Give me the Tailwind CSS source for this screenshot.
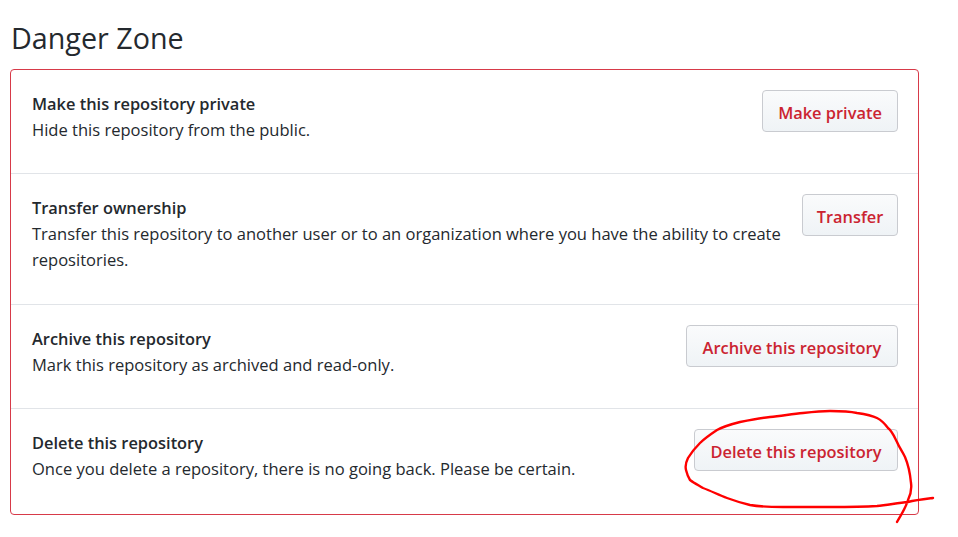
<!DOCTYPE html>
<html lang="en">
<head>
    <meta charset="UTF-8">
    <meta name="viewport" content="width=device-width, initial-scale=1.0">
    <title>Danger Zone</title>
    <script src="https://cdn.jsdelivr.net/npm/@tailwindcss/browser@4"></script>
</head>
<body class="bg-white font-['Open_Sans',sans-serif] text-[#24292e]">
    <div class="relative w-[958px] h-[537px] overflow-hidden pl-[10px] pr-[39px] pt-[19px]">
        <h2 class="pl-px text-[28.7px] leading-[38px] mb-[12px]">Danger Zone</h2>

        <!-- Settings box -->
        <div class="border border-[#d73a49] rounded-[4px] text-[16.55px] leading-[26px]">
            <div class="flex items-start justify-between h-[104px] pl-[21px] pr-[20px] pt-[21px] border-b border-[#e1e4e8]">
                <div>
                    <p class="font-semibold text-[16.4px]">Make this repository private</p>
                    <p>Hide this repository from the public.</p>
                </div>
                <button class="-mt-px pt-[3px] h-[42px] w-[136px] shrink-0 rounded-[4px] border border-[#c9cbd0] bg-gradient-to-b from-[#fafbfc] to-[#eff3f6] text-[#cb2431] font-semibold text-[16.4px]">Make private</button>
            </div>
            <div class="flex items-start justify-between h-[131px] pl-[21px] pr-[20px] pt-[21px] border-b border-[#e1e4e8]">
                <div class="w-[760px]">
                    <p class="font-semibold text-[16.4px]">Transfer ownership</p>
                    <p>Transfer this repository to another user or to an organization where you have the ability to create repositories.</p>
                </div>
                <button class="-mt-px pt-[3px] h-[42px] w-[96px] shrink-0 rounded-[4px] border border-[#c9cbd0] bg-gradient-to-b from-[#fafbfc] to-[#eff3f6] text-[#cb2431] font-semibold text-[16.4px]">Transfer</button>
            </div>
            <div class="flex items-start justify-between h-[104px] pl-[21px] pr-[20px] pt-[21px] border-b border-[#e1e4e8]">
                <div>
                    <p class="font-semibold text-[16.4px]">Archive this repository</p>
                    <p>Mark this repository as archived and read-only.</p>
                </div>
                <button class="-mt-px pt-[3px] h-[42px] w-[212px] shrink-0 rounded-[4px] border border-[#c9cbd0] bg-gradient-to-b from-[#fafbfc] to-[#eff3f6] text-[#cb2431] font-semibold text-[16.4px]">Archive this repository</button>
            </div>
            <div class="flex items-start justify-between h-[105px] pl-[21px] pr-[20px] pt-[21px]">
                <div>
                    <p class="font-semibold text-[16.4px]">Delete this repository</p>
                    <p>Once you delete a repository, there is no going back. Please be certain.</p>
                </div>
                <button class="-mt-px pt-[3px] h-[42px] w-[204px] shrink-0 rounded-[4px] border border-[#c9cbd0] bg-gradient-to-b from-[#fafbfc] to-[#eff3f6] text-[#cb2431] font-semibold text-[16.4px]">Delete this repository</button>
            </div>
        </div>

        <!-- Hand drawn circle -->
        <svg class="absolute left-0 top-0 pointer-events-none" width="958" height="537" viewBox="0 0 958 537" fill="none">
            <path d="M897 522C900 516 905 510 908 500C911 494 912 490 911 483C910 472 908 464 905 457C902 451 899 447 897 442C894 436 892 431 888 428C885 424 881 420 877 418C871 415 864 414 857 413C848 411 839 411 830 411C821 411 812 412 803 413C792 414 781 416 770 417C760 418 750 420 740 422C732 424 724 426 717 430C711 434 705 438 700 443C695 448 691 453 688 458C686 462 685 466 686 470C687 474 688 477 690 480C694 483 698 485 703 488C711 491 719 495 727 498C735 501 742 503 750 505C761 507 772 507 783 507C799 507 814 507 830 507C846 507 861 507 877 506C887 505 898 503 908 502C916 500 925 499 933 498" stroke="#ff0000" stroke-width="2.4" stroke-linecap="round" stroke-linejoin="round"/>
        </svg>
    </div>
</body>
</html>
